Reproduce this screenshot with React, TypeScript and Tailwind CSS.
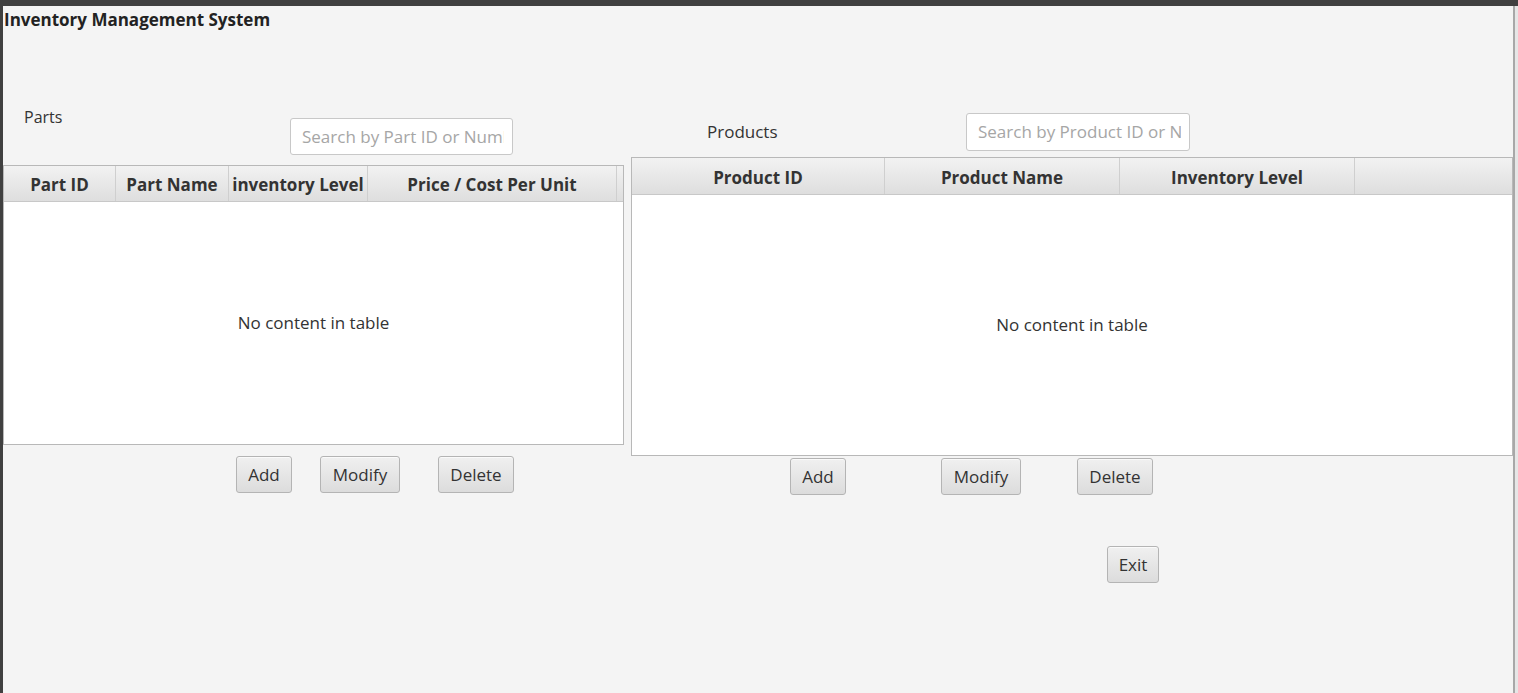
import React from "react";

const font = { fontFamily: '"Open Sans", "Noto Sans", sans-serif' };

interface Column {
  label: string;
  width: number;
}

const partColumns: Column[] = [
  { label: "Part ID", width: 112 },
  { label: "Part Name", width: 113 },
  { label: "inventory Level", width: 139 },
  { label: "Price / Cost Per Unit", width: 249 },
];

const productColumns: Column[] = [
  { label: "Product ID", width: 253 },
  { label: "Product Name", width: 235 },
  { label: "Inventory Level", width: 235 },
];

const FxButton = ({ label, className }: { label: string; className?: string }) => (
  <button
    className={
      "h-[37px] rounded-[3px] border border-[#b4b4b4] bg-gradient-to-b from-[#f0f0f0] to-[#dcdcdc] px-0 text-[17px] text-[#333333] shadow-[inset_0_1px_0_#fafafa] " +
      (className || "")
    }
  >
    {label}
  </button>
);

// placeholder is clipped inside the padding, like the JavaFX text field
const SearchBox = ({ placeholder, className }: { placeholder: string; className?: string }) => (
  <div
    className={
      "flex shrink-0 items-center rounded-[3px] border border-[#c8c8c8] bg-white pl-[11px] pr-[8px] " +
      (className || "")
    }
  >
    <div className="flex-1 overflow-hidden whitespace-nowrap text-[17px] text-[#a6a6a6]">{placeholder}</div>
  </div>
);

const Table = ({
  columns,
  height,
  headerHeight,
  headerPad,
  className,
}: {
  columns: Column[];
  height: number;
  headerHeight: number;
  headerPad: string;
  className?: string;
}) => (
  <div
    className={"flex flex-col border border-[#b8b8b8] bg-white " + (className || "")}
    style={{ height }}
  >
    <div
      className="flex shrink-0 border-b border-[#c8c8c8] bg-gradient-to-b from-[#f2f2f2] to-[#dedede]"
      style={{ height: headerHeight }}
    >
      {columns.map((col, i) => (
        <div
          key={i}
          className={
            "flex shrink-0 items-center justify-center whitespace-nowrap border-r border-[#cfcfcf] text-[17px] font-bold text-[#333333] " +
            headerPad
          }
          style={{ width: col.width }}
        >
          {col.label}
        </div>
      ))}
      <div className="flex-1" />
    </div>
    <div className="flex flex-1 items-center justify-center text-[17px] text-[#333333]">
      No content in table
    </div>
  </div>
);

const App = () => {
  return (
    <div className="h-[693px] w-[1518px] overflow-hidden bg-[#404040] pl-[3px] pt-[6px]" style={font}>
      <div className="flex h-[687px]">
        <div className="flex w-[1510px] flex-col bg-[#f4f4f4]">
          <div className="h-[94px] pl-[1px] pt-[3px] text-[17px] font-bold leading-[22px] text-[#222222]">
            Inventory Management System
          </div>
          <div className="flex gap-[7px]">
            {/* Parts */}
            <div className="flex w-[621px] flex-col">
              <div className="flex h-[55px] items-start">
                <div className="w-[287px] shrink-0 pl-[21px] pt-[7px] text-[16px] leading-[20px] text-[#333333]">
                  Parts
                </div>
                <SearchBox placeholder="Search by Part ID or Number" className="mt-[18px] h-[37px] w-[223px]" />
              </div>
              <Table
                columns={partColumns}
                height={280}
                headerHeight={36}
                headerPad="pt-[2px]"
                className="mt-[10px] w-[621px]"
              />
              <div className="mt-[11px] flex">
                <FxButton label="Add" className="ml-[233px] w-[56px]" />
                <FxButton label="Modify" className="ml-[28px] w-[80px]" />
                <FxButton label="Delete" className="ml-[38px] w-[76px]" />
              </div>
            </div>
            {/* Products */}
            <div className="flex flex-1 flex-col">
              <div className="flex h-[51px] items-start">
                <div className="w-[335px] shrink-0 pl-[76px] pt-[22px] text-[17px] leading-[20px] text-[#333333]">
                  Products
                </div>
                <SearchBox placeholder="Search by Product ID or Name" className="mt-[13px] h-[38px] w-[224px]" />
              </div>
              <Table
                columns={productColumns}
                height={299}
                headerHeight={37}
                headerPad="pt-[4px]"
                className="mt-[6px] w-full"
              />
              <div className="mt-[2px] flex">
                <FxButton label="Add" className="ml-[159px] w-[56px]" />
                <FxButton label="Modify" className="ml-[95px] w-[80px]" />
                <FxButton label="Delete" className="ml-[56px] w-[76px]" />
              </div>
              <FxButton label="Exit" className="ml-[476px] mt-[51px] w-[52px]" />
            </div>
          </div>
        </div>
        <div className="w-[2px] bg-[#a8a8a8]" />
        <div className="w-[3px] bg-[#e6e6e6]" />
      </div>
    </div>
  );
};

export default App;
